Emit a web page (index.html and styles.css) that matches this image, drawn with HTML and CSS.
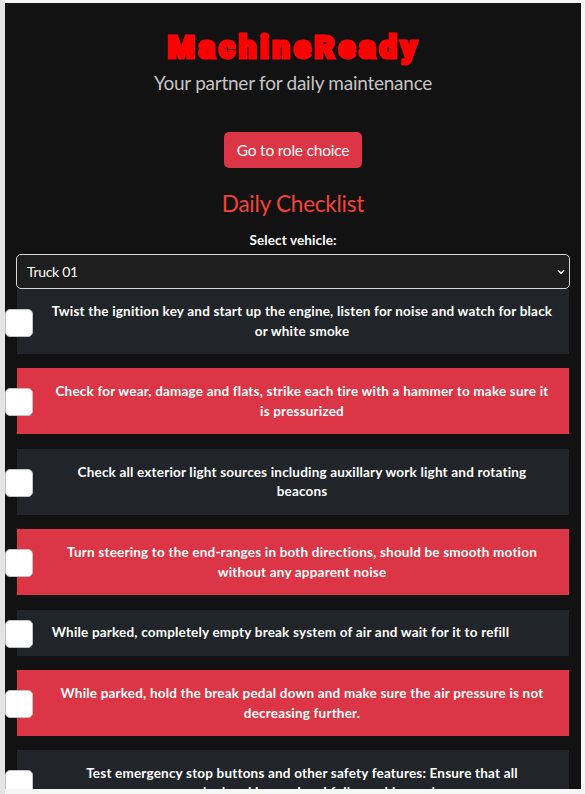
FILE: index.html
```html
<!DOCTYPE html>
<html lang="en">
<head>
<meta charset="utf-8">
<title>MachineReady</title>
<link rel="stylesheet" href="styles.css">
</head>
<body>
<main class="app">
  <header class="header">
    <h1 class="brand">MachineReady</h1>
    <p class="tagline">Your partner for daily maintenance</p>
  </header>
  <button class="button" type="button">Go to role choice</button>
  <h2 class="title">Daily Checklist</h2>
  <label class="label" for="vehicle">Select vehicle:</label>
  <div class="select-wrap">
    <select class="select" id="vehicle"><option>Truck 01</option></select>
    <svg class="chevron" viewBox="0 0 8 6"><path d="M1 1.2 4 4.2 7 1.2"/></svg>
  </div>
  <ul class="list">
    <li class="item"><input class="check" type="checkbox"><p class="text">Twist the ignition key and start up the engine, listen for noise and watch for black<br>or white smoke</p></li>
    <li class="item red"><input class="check" type="checkbox"><p class="text">Check for wear, damage and flats, strike each tire with a hammer to make sure it<br>is pressurized</p></li>
    <li class="item"><input class="check" type="checkbox"><p class="text">Check all exterior light sources including auxillary work light and rotating<br>beacons</p></li>
    <li class="item red"><input class="check" type="checkbox"><p class="text">Turn steering to the end-ranges in both directions, should be smooth motion<br>without any apparent noise</p></li>
    <li class="item short"><input class="check" type="checkbox"><p class="text">While parked, completely empty break system of air and wait for it to refill</p></li>
    <li class="item red"><input class="check" type="checkbox"><p class="text">While parked, hold the break pedal down and make sure the air pressure is not<br>decreasing further.</p></li>
    <li class="item last"><input class="check" type="checkbox"><p class="text">Test emergency stop buttons and other safety features: Ensure that all<br>are marked and in good and fully working order</p></li>
  </ul>
</main>
</body>
</html>
```
FILE: styles.css
```css
* { box-sizing: border-box; }
body {
  margin: 0;
  height: 794px;
  padding: 3px 4px 5px 5px;
  overflow: hidden;
  background: linear-gradient(90deg, #e4e4e4 0 5px, #f6f6f6 5px);
  font-family: Lato, "Open Sans", sans-serif;
}
.app {
  height: 786px;
  padding: 25px 12px 0;
  overflow: hidden;
  background: #121212;
  color: #fff;
  display: flex;
  flex-direction: column;
  align-items: center;
}
.header { text-align: center; }
.brand {
  margin: 0;
  height: 39px;
  font: 900 31px/39px Roboto, sans-serif;
  color: #f00;
  -webkit-text-stroke: 3.2px #f00;
  letter-spacing: 3.8px;
  text-indent: 2px;
}
.tagline { margin: 3px 0 0; font-size: 19px; line-height: 26px; letter-spacing: -0.25px; color: #c4c4c4; white-space: nowrap; }
.button {
  flex: none;
  width: 138px;
  height: 36px;
  margin-top: 36px;
  padding: 0 0 1px;
  border: 0;
  border-radius: 5px;
  background: #dc3545;
  color: #fff;
  font: 15.5px Lato, sans-serif;
  letter-spacing: -0.22px;
  white-space: nowrap;
}
.title { margin: 21px 0 0; font-size: 22.5px; line-height: 30px; font-weight: 400; letter-spacing: -0.22px; color: #f44336; }
.label { margin-top: 11px; font-size: 13.5px; line-height: 20px; font-weight: 700; letter-spacing: 0.12px; }
.select-wrap { position: relative; width: 554px; height: 35px; margin: 4px -1px 1px; flex: none; }
.select {
  display: block;
  appearance: none;
  width: 100%;
  height: 35px;
  padding: 0 10px 1px;
  border: 1px solid #d8d8d8;
  border-radius: 5px;
  background: #1e1e1e;
  color: #fff;
  font: 14px Lato, sans-serif;
  letter-spacing: -0.3px;
}
.chevron { position: absolute; right: 5px; top: 15px; width: 8px; height: 6px; fill: none; stroke: #fff; stroke-width: 1.6; }
.list { width: 552px; margin: -1px 0 0; padding: 0; list-style: none; display: flex; flex-direction: column; gap: 14.4px; flex: none; }
.item { position: relative; height: 66px; padding: 14px 0 0 18px; background: #212529; text-align: center; }
.item:first-child { height: 65px; padding-top: 13px; }
.item.short { height: 46px; padding: 13px 25px 0 0; }
.item.last .text { line-height: 18.4px; }
.red { background: #dc3545; }
.text { margin: 0; font-size: 13.5px; line-height: 19.6px; font-weight: 700; letter-spacing: 0.19px; white-space: nowrap; }
.check {
  position: absolute;
  left: -12px;
  top: 50%;
  width: 28px;
  height: 28px;
  margin: -13px 0 0;
  appearance: none;
  border: 1px solid #bfc3c6;
  border-radius: 5px;
  background: #fff;
}
```
